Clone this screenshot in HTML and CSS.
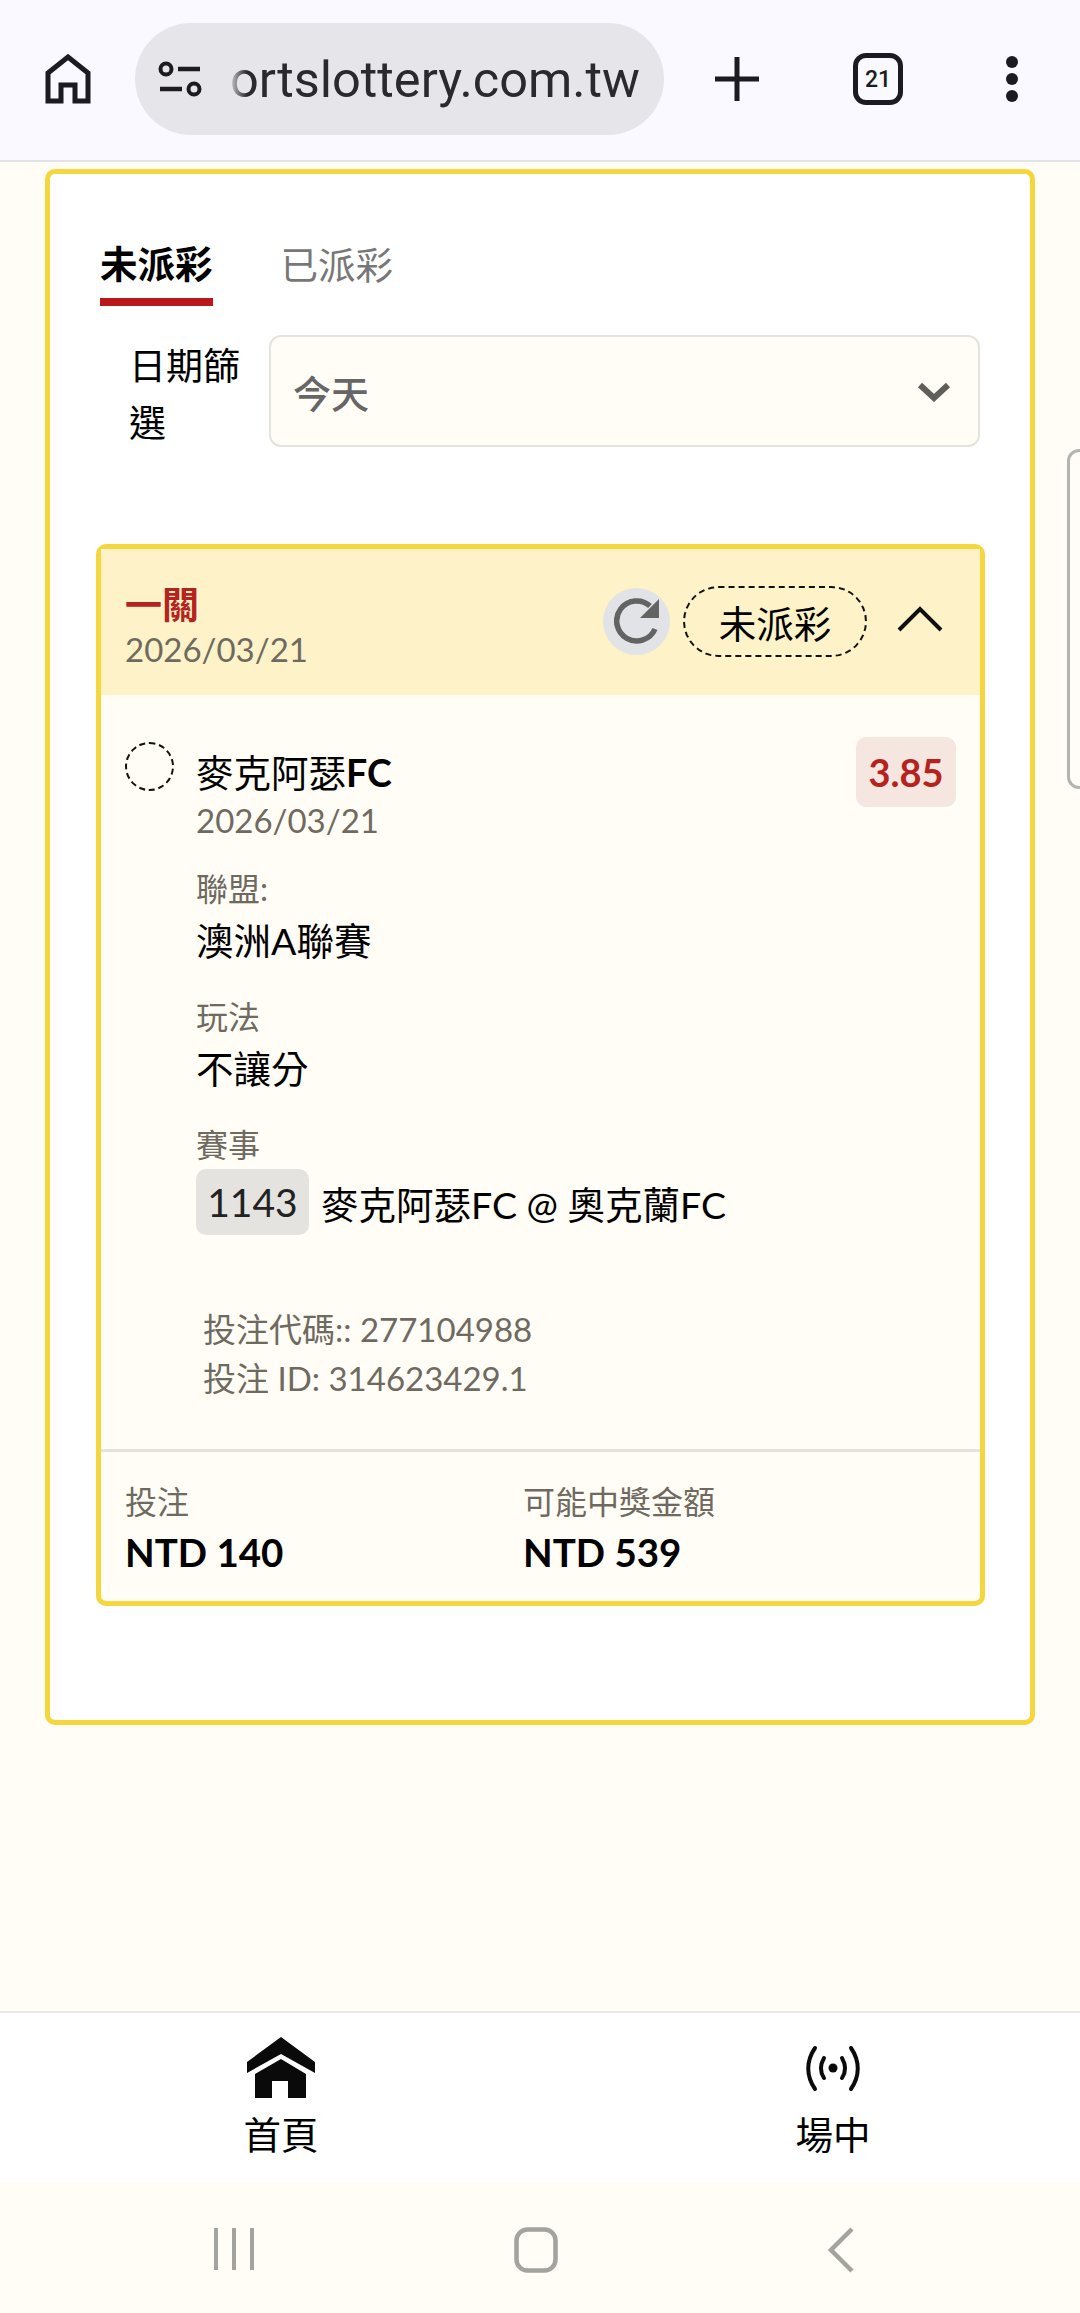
FILE: index.html
```html
<!DOCTYPE html>
<html lang="zh-Hant">
<head>
    <meta charset="UTF-8">
    <meta name="viewport" content="width=device-width, initial-scale=1.0">
    <title>未派彩</title>
    <link rel="stylesheet" href="styles.css">
</head>
<body>
    <header class="browser-bar">
        <svg class="icon-home-outline" viewBox="0 0 46 50"><path d="M3 47V19L23 3l20 16v28H30V31H16v16z" fill="none" stroke="#1c1b20" stroke-width="5" stroke-linejoin="miter"/></svg>
        <div class="url-pill">
            <svg class="icon-tune" viewBox="0 0 44 36"><circle cx="8" cy="8" r="5.5" fill="none" stroke="#1c1b20" stroke-width="4"/><path d="M20 8h22M2 28h22" stroke="#1c1b20" stroke-width="4.5" fill="none"/><circle cx="36" cy="28" r="5.5" fill="none" stroke="#1c1b20" stroke-width="4"/></svg>
            <span class="url-text">ortslottery.com.tw</span>
        </div>
        <svg class="icon-plus" viewBox="0 0 46 46"><path d="M23 1v44M1 23h44" stroke="#1c1b20" stroke-width="5" fill="none"/></svg>
        <div class="tab-count">21</div>
        <svg class="icon-dots" viewBox="0 0 14 46"><circle cx="7" cy="6" r="6" fill="#1c1b20"/><circle cx="7" cy="23" r="6" fill="#1c1b20"/><circle cx="7" cy="40" r="6" fill="#1c1b20"/></svg>
    </header>

    <main class="page">
        <div class="side-handle"></div>
        <section class="panel">
            <div class="tabs">
                <div class="tab tab-active">未派彩</div>
                <div class="tab tab-off">已派彩</div>
            </div>
            <div class="filter">
                <label class="filter-label">日期篩選</label>
                <div class="select">
                    <span>今天</span>
                    <svg class="select-arrow" viewBox="0 0 34 20"><path d="M3 3l14 13L31 3" fill="none" stroke="#5f5e5a" stroke-width="6"/></svg>
                </div>
            </div>

            <article class="bet">
                <div class="bet-head">
                    <div class="bet-title">
                        <div class="bet-type">一關</div>
                        <div class="bet-date">2026/03/21</div>
                    </div>
                    <div class="refresh">
                        <svg viewBox="0 0 46 46"><path d="M41 31A20 20 0 1 1 36 8" fill="none" stroke="#636363" stroke-width="5.5"/><path d="M45 1v19H26z" fill="#636363"/></svg>
                    </div>
                    <div class="status">未派彩</div>
                    <svg class="collapse" viewBox="0 0 46 28"><path d="M2 25L23 4l21 21" fill="none" stroke="#111" stroke-width="4"/></svg>
                </div>

                <div class="leg">
                    <div class="leg-dot"></div>
                    <div class="leg-main">
                        <div class="leg-name">麥克阿瑟<b>FC</b></div>
                        <div class="leg-date">2026/03/21</div>
                        <div class="field-label field-first">聯盟:</div>
                        <div class="field-value">澳洲A聯賽</div>
                        <div class="field-label">玩法</div>
                        <div class="field-value">不讓分</div>
                        <div class="field-label">賽事</div>
                        <div class="match">
                            <span class="match-no">1143</span>
                            <span>麥克阿瑟FC @ 奧克蘭FC</span>
                        </div>
                    </div>
                    <div class="odds">3.85</div>
                </div>

                <div class="codes">
                    <div>投注代碼:: 277104988</div>
                    <div>投注 ID: 314623429.1</div>
                </div>

                <div class="bet-foot">
                    <div class="amount">
                        <div class="amount-label">投注</div>
                        <div class="amount-value">NTD 140</div>
                    </div>
                    <div class="amount">
                        <div class="amount-label">可能中獎金額</div>
                        <div class="amount-value">NTD 539</div>
                    </div>
                </div>
            </article>
        </section>
    </main>

    <nav class="bottom-nav">
        <div class="nav-item">
            <svg class="nav-icon" viewBox="0 0 68 62"><path d="M34 0L68 25v11L34 17 0 36V25z" fill="#0a0a0a"/><path d="M34 22l25 15v24H41V44H25v17H8V37z" fill="#0a0a0a"/></svg>
            <span>首頁</span>
        </div>
        <div class="nav-item">
            <svg class="nav-icon" viewBox="0 0 68 62"><g fill="none" stroke="#0a0a0a" stroke-width="4" stroke-linecap="round"><path d="M16 11c-9 13-9 28 0 41M52 11c9 13 9 28 0 41"/><path d="M25 21c-4 7-4 14 0 20M43 21c4 7 4 14 0 20"/></g><circle cx="34" cy="31" r="4.5" fill="#0a0a0a"/></svg>
            <span>場中</span>
        </div>
    </nav>

    <div class="system-nav">
        <svg class="sys-recent" viewBox="0 0 42 44"><path d="M3 1v42M21 1v42M39 1v42" stroke="#a3a39f" stroke-width="4" fill="none"/></svg>
        <svg class="sys-home" viewBox="0 0 44 46"><rect x="2.5" y="2.5" width="39" height="41" rx="11" fill="none" stroke="#a3a39f" stroke-width="4.5"/></svg>
        <svg class="sys-back" viewBox="0 0 28 46"><path d="M25 2L4 23l21 21" fill="none" stroke="#a3a39f" stroke-width="4.5"/></svg>
    </div>
</body>
</html>
```
FILE: styles.css
```css
* {
    box-sizing: border-box;
}
body {
    margin: 0;
    width: 1080px;
    height: 2313px;
    display: flex;
    flex-direction: column;
    overflow: hidden;
    background-color: #fffdf6;
    color: #000;
    font-family: Lato, "Noto Sans CJK TC", sans-serif;
}

/* browser chrome */
.browser-bar {
    height: 162px;
    flex: none;
    display: flex;
    align-items: center;
    background-color: #f9f9ff;
    border-bottom: 2px solid #e0e2e6;
    padding-bottom: 2px;
}
.icon-home-outline {
    width: 46px;
    height: 50px;
    margin-left: 45px;
}
.url-pill {
    width: 529px;
    height: 112px;
    margin-left: 44px;
    border-radius: 56px;
    background-color: #e6e6ea;
    display: flex;
    align-items: center;
    position: relative;
}
.icon-tune {
    width: 44px;
    height: 36px;
    margin-left: 23px;
}
.url-text {
    margin-left: 28px;
    font-family: Roboto, sans-serif;
    font-size: 50.5px;
    color: #2a2a2e;
    white-space: nowrap;
}
.url-pill::after {
    content: "";
    position: absolute;
    left: 92px;
    top: 30px;
    width: 20px;
    height: 50px;
    background: linear-gradient(to right, #e6e6ea, rgba(230, 230, 234, 0));
}
.icon-plus {
    width: 46px;
    height: 46px;
    margin-left: 50px;
}
.tab-count {
    width: 50px;
    height: 52px;
    margin-left: 93px;
    border: 5px solid #1c1b20;
    border-radius: 13px;
    display: flex;
    align-items: center;
    justify-content: center;
    font-family: Roboto, sans-serif;
    font-size: 23px;
    font-weight: 500;
    color: #1c1b20;
}
.icon-dots {
    width: 14px;
    height: 46px;
    margin-left: 102px;
}

/* page */
.page {
    flex: 1;
    position: relative;
    padding: 7px 45px 0;
}
.side-handle {
    position: absolute;
    left: 1067px;
    top: 287px;
    width: 30px;
    height: 340px;
    border: 3px solid #b4b4b2;
    border-radius: 12px;
}
.panel {
    background-color: #fff;
    border: 5px solid #f5d63d;
    border-radius: 10px;
    padding: 0 45px 114px 46px;
}
.tabs {
    display: flex;
    padding: 65px 0 0 4px;
}
.tab {
    font-size: 37.5px;
    line-height: 50px;
}
.tab-active {
    font-weight: 700;
    padding-bottom: 9px;
    border-bottom: 8px solid #b8171c;
}
.tab-off {
    margin-left: 68px;
    padding-top: 1px;
    color: #777;
}
.filter {
    display: flex;
    height: 112px;
    margin-top: 29px;
    padding-left: 33px;
}
.filter-label {
    width: 122px;
    margin-right: 18px;
    padding-top: 2px;
    font-size: 37px;
    line-height: 57px;
}
.select {
    width: 711px;
    height: 112px;
    padding: 0 27px 0 22px;
    display: flex;
    align-items: center;
    justify-content: space-between;
    background-color: #fffdf6;
    border: 2px solid #e4e3de;
    border-radius: 12px;
    font-size: 38px;
    font-weight: 500;
    color: #666;
}
.select-arrow {
    width: 34px;
    height: 20px;
    margin-top: 2px;
}

/* bet card */
.bet {
    margin-top: 97px;
    height: 1062px;
    background-color: #fffdf6;
    border: 5px solid #f5d63d;
    border-radius: 10px;
    display: flex;
    flex-direction: column;
}
.bet-head {
    height: 146px;
    flex: none;
    display: flex;
    align-items: center;
    padding: 0 0 2px 24px;
    background-color: #fdf2c8;
}
.bet-title {
    flex: 1;
    padding-top: 11px;
}
.bet-type {
    font-size: 37px;
    line-height: 44px;
    font-weight: 700;
    color: #b5231f;
}
.bet-date {
    font-size: 33px;
    line-height: 44px;
    color: #6f6a60;
}
.refresh {
    width: 67px;
    height: 67px;
    border-radius: 50%;
    background-color: #e2e3e6;
    display: flex;
    align-items: center;
    justify-content: center;
}
.refresh svg {
    width: 46px;
    height: 46px;
}
.status {
    width: 184px;
    height: 71px;
    margin-left: 13px;
    border: 2px dashed #111;
    border-radius: 36px;
    display: flex;
    align-items: center;
    justify-content: center;
    font-size: 37.5px;
}
.collapse {
    width: 46px;
    height: 28px;
    margin: 0 37px 4px 30px;
}
.leg {
    display: flex;
    padding: 42px 24px 0;
    position: relative;
}
.leg-dot {
    width: 49px;
    height: 49px;
    flex: none;
    margin-top: 5px;
    border: 2px dashed #111;
    border-radius: 50%;
}
.leg-main {
    flex: 1;
    margin-left: 22px;
}
.leg-name {
    margin-top: 11px;
    font-size: 37.5px;
    line-height: 50px;
}
.leg-date {
    font-size: 33px;
    line-height: 44px;
    color: #6f6a60;
}
.field-label {
    margin-top: 30px;
    font-size: 32px;
    line-height: 42px;
    color: #6f6a60;
}
.field-first {
    margin-top: 26px;
}
.field-value {
    margin-top: 6px;
    font-size: 37.5px;
    line-height: 50px;
}
.match {
    display: flex;
    align-items: center;
    margin-top: 3px;
    font-size: 37.5px;
}
.match-no {
    width: 113px;
    height: 66px;
    margin-right: 12px;
    background-color: #e4e3df;
    border-radius: 10px;
    display: flex;
    align-items: center;
    justify-content: center;
    font-size: 39px;
    color: #222;
}
.odds {
    position: absolute;
    right: 24px;
    top: 42px;
    width: 100px;
    height: 70px;
    background-color: #f5e6e0;
    border-radius: 10px;
    display: flex;
    align-items: center;
    justify-content: center;
    font-size: 38px;
    font-weight: 700;
    color: #b5231f;
}
.codes {
    margin-top: 70px;
    padding-left: 102px;
    font-size: 33px;
    line-height: 49px;
    color: #6f6a60;
}
.bet-foot {
    margin-top: auto;
    height: 152px;
    flex: none;
    display: flex;
    padding: 28px 24px 0;
    border-top: 3px solid #e4e3df;
}
.amount {
    width: 398px;
}
.amount-label {
    font-size: 32px;
    line-height: 44px;
    color: #6f6a60;
}
.amount-value {
    margin-top: 3px;
    font-size: 38.5px;
    line-height: 50px;
    font-weight: 700;
}

/* bottom */
.bottom-nav {
    height: 172px;
    flex: none;
    display: flex;
    justify-content: space-between;
    padding: 24px 197px 0 231px;
    background-color: #fff;
    border-top: 2px solid #e8e8e6;
}
.nav-item {
    width: 100px;
    display: flex;
    flex-direction: column;
    align-items: center;
    font-size: 37.5px;
    line-height: 48px;
    white-space: nowrap;
}
.nav-icon {
    width: 68px;
    height: 62px;
    flex: none;
    margin-bottom: 12px;
}
.system-nav {
    height: 130px;
    flex: none;
    position: relative;
    display: flex;
    align-items: flex-start;
    padding-top: 44px;
    background-color: #fffdf6;
}
.sys-recent {
    width: 42px;
    height: 44px;
    margin-left: 213px;
}
.sys-home {
    width: 44px;
    height: 46px;
    margin-left: 259px;
}
.sys-back {
    width: 28px;
    height: 46px;
    margin-left: 269px;
}
```
